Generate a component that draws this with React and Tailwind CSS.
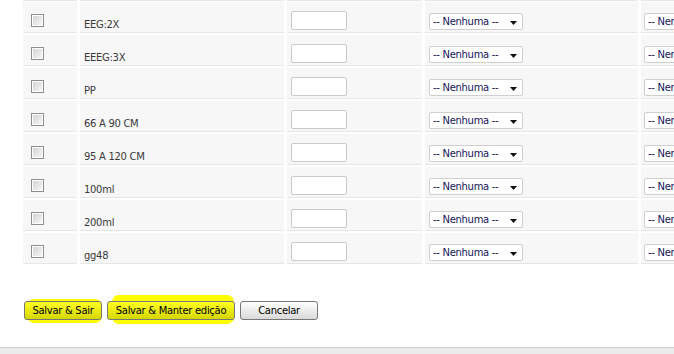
import React from 'react';

const rows = ['EEG:2X', 'EEEG:3X', 'PP', '66 A 90 CM', '95 A 120 CM', '100ml', '200ml', 'gg48'];

const Cell = ({ className = '', children }) => (
  <div className={`h-full bg-[#f7f7f7] border-b border-[#e6e6e6] ${className}`}>{children}</div>
);

const FakeSelect = ({ className = '' }) => (
  <div className={`h-[17px] bg-white border border-[#cfcfcf] rounded-[2px] flex items-center pl-[3px] pr-[5px] text-[10px] tracking-[-0.3px] text-[#14145a] ${className}`}>
    <span className="flex-1 whitespace-nowrap">-- Nenhuma --</span>
    <svg width="7" height="4" viewBox="0 0 7 4" className="mt-[2px] shrink-0">
      <path d="M0 0h7L3.5 4z" fill="#111" />
    </svg>
  </div>
);

const Checkbox = () => (
  <div className="w-[13px] h-[13px] border border-[#8e8e8e] p-px bg-white">
    <div className="w-full h-full bg-gradient-to-br from-[#d4d4d4] to-[#f6f6f6]" />
  </div>
);

const Btn = ({ children, marked, w, mark }) => (
  <div className={`relative isolate ${w}`}>
    {marked && <span className={`absolute -z-10 bg-[#ffff00] rounded-[7px] ${mark}`} />}
    <button
      className={`block w-full h-[19px] border border-[#777] rounded-[3px] text-[10px] tracking-[-0.3px] leading-none text-black ${
        marked ? 'bg-gradient-to-b from-[#ffff20] to-[#d6d600]' : 'bg-gradient-to-b from-white to-[#d9d9d9]'
      }`}
    >
      {children}
    </button>
  </div>
);

export default function App() {
  const grid = 'grid grid-cols-[54px_204px_135px_213px_200px] gap-x-[3px]';
  return (
    <div className="w-[674px] h-[354px] bg-white flex flex-col overflow-hidden font-['DejaVu_Sans',sans-serif]">
      <div className="pl-[23px] w-[674px] overflow-hidden">
        <div className={`${grid} h-px`}>
          <div className="bg-[#e6e6e6]" />
          <div className="bg-[#e6e6e6]" />
          <div className="bg-[#e6e6e6]" />
          <div className="bg-[#e6e6e6]" />
          <div className="bg-[#e6e6e6]" />
        </div>
        <div className="flex flex-col gap-[2px] mt-px">
          {rows.map((r) => (
            <div key={r} className={`${grid} h-[31px]`}>
              <Cell className="pl-[8px] pt-[12px]">
                <Checkbox />
              </Cell>
              <Cell className="pl-[4px] pt-[17px] text-[10px] leading-[12px] tracking-[-0.3px] text-[#3a3a3a] whitespace-nowrap">
                {r}
              </Cell>
              <Cell className="pl-[4px] pt-[9px]">
                <input className="block w-[56px] h-[19px] bg-white border border-[#cacaca] rounded-[2px] outline-none" />
              </Cell>
              <Cell className="pl-[4px] pt-[11px]">
                <FakeSelect className="w-[94px]" />
              </Cell>
              <Cell className="pl-[3px] pt-[11px]">
                <FakeSelect className="w-[94px]" />
              </Cell>
            </div>
          ))}
        </div>
      </div>

      <div className="flex gap-[5px] pl-[24px] mt-[37px]">
        <Btn marked w="w-[78px]" mark="left-[3px] right-[0px] -top-[2px] -bottom-[3px]">Salvar &amp; Sair</Btn>
        <Btn marked w="w-[128px]" mark="left-[5px] right-[1px] -top-[6px] -bottom-[4px]">Salvar &amp; Manter edição</Btn>
        <Btn w="w-[78px]">Cancelar</Btn>
      </div>

      <div className="flex-1" />
      <div className="h-[7px] border-t border-[#cccccc] bg-[#ebebeb]" />
    </div>
  );
}
